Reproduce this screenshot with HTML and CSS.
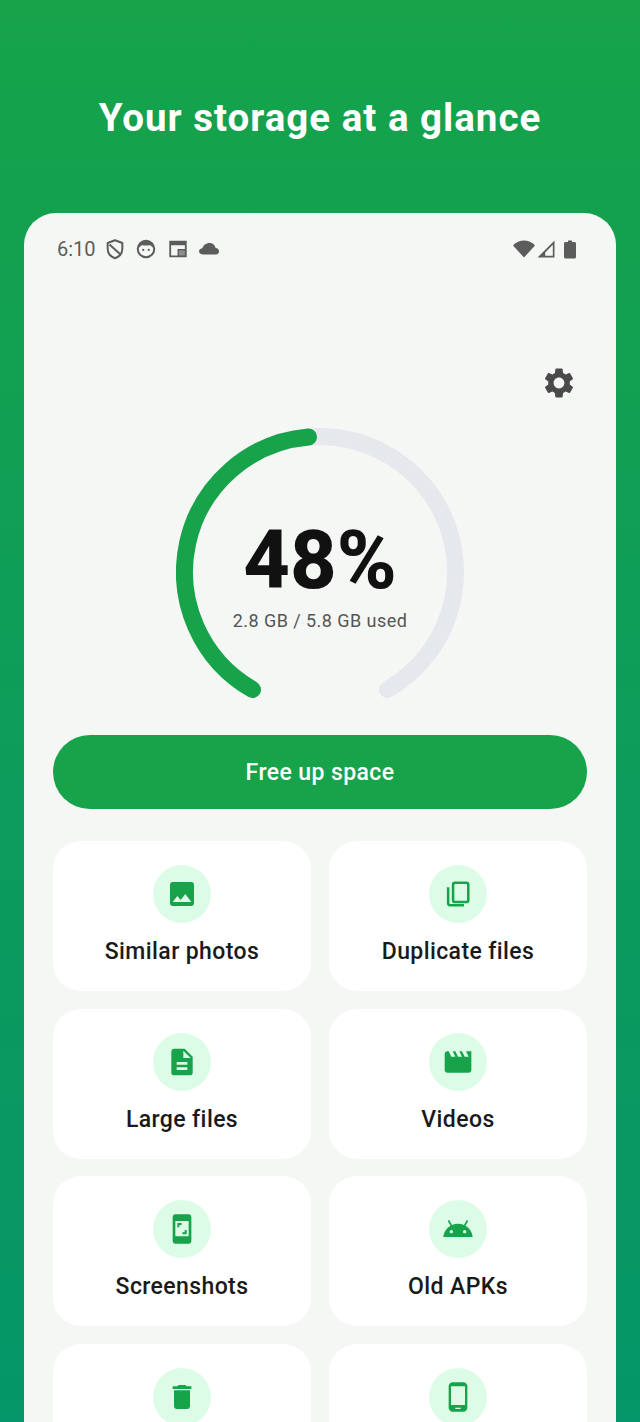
FILE: index.html
```html
<!DOCTYPE html>
<html lang="en">
<head>
    <meta charset="UTF-8">
    <meta name="viewport" content="width=device-width, initial-scale=1.0">
    <title>Storage</title>
    <link rel="stylesheet" href="styles.css">
</head>
<body>
    <div class="screen">
        <h1 class="headline">Your storage at a glance</h1>
        <main class="sheet">
            <!-- Status bar -->
            <div class="status-bar">
                <div class="status-left">
                    <span class="clock">6:10</span>
                    <svg class="status-icon" viewBox="0 0 24 24"><path d="M12 2.5 4 5.5v6c0 5 3.4 9 8 10.5 4.6-1.5 8-5.500 8-10.500v-6z" fill="none" stroke="#5c5c5c" stroke-width="2.2" stroke-linejoin="round"/><path d="M6 7 18 18" stroke="#5c5c5c" stroke-width="2.2"/></svg>
                    <svg class="status-icon" viewBox="0 0 24 24"><circle cx="12" cy="12" r="9" fill="none" stroke="#5c5c5c" stroke-width="2.2"/><path d="M4 10.5C5 5 9 3 12 3s7 2 8 7.5c-2-1.5-3-2.5-4-3-1 1-7 1-8 0-1 .5-2 1.5-4 3z" fill="#5c5c5c"/><circle cx="9" cy="13" r="1.2" fill="#5c5c5c"/><circle cx="15" cy="13" r="1.2" fill="#5c5c5c"/></svg>
                    <svg class="status-icon" viewBox="0 0 24 24"><path fill-rule="evenodd" d="M2.5 3h19v18h-19zM4.500 8v11h7v-7h8V8z" fill="#5c5c5c"/><path d="M13 13.500h6.500V19H13z" fill="#8f8f8f"/></svg>
                    <svg class="cloud-icon" viewBox="0 0 20 13.5"><path d="M4 12.500c-2.200 0-4-1.300-4-3.200 0-1.800 1.600-3 3.400-3.100C4.200 3.400 7 1 10.500 1c3.500 0 5.500 2.300 6.100 5 2 .2 3.400 1.500 3.400 3.300 0 1.900-1.200 3.200-3 3.200z" fill="#5c5c5c"/></svg>
                </div>
                <div class="status-right">
                    <svg class="wifi-icon" viewBox="0 0 22 18"><path d="M0 5.500C3 2.300 7 .5 11 .5s8 1.800 11 5L11 17.500z" fill="#5c5c5c"/></svg>
                    <svg class="signal-icon" viewBox="0 0 18 18"><path fill-rule="evenodd" d="M17.500 .5v17H.5zM15.800 4.700v11.100H8.200v-3.200z" fill="#5c5c5c"/></svg>
                    <svg class="battery-icon" viewBox="0 0 12 18"><path d="M4 0h4v1.500h2.500c.8 0 1.500.7 1.500 1.500v13.500c0 .8-.7 1.500-1.500 1.500h-9C.7 18 0 17.300 0 16.500V3c0-.8.7-1.500 1.500-1.500H4z" fill="#5c5c5c"/></svg>
                </div>
            </div>

            <div class="settings-row">
                <svg class="settings-icon" viewBox="0 0 24 24"><path d="M19.14 12.94c.04-.3.06-.61.06-.94 0-.32-.02-.64-.07-.94l2.03-1.58c.18-.14.23-.41.12-.61l-1.92-3.32c-.12-.22-.37-.29-.59-.22l-2.39.96c-.5-.38-1.03-.7-1.62-.94l-.36-2.54c-.04-.24-.24-.41-.48-.41h-3.84c-.24 0-.43.17-.47.41l-.36 2.54c-.59.24-1.13.57-1.62.94l-2.39-.96c-.22-.08-.47 0-.59.22L2.74 8.87c-.12.21-.08.47.12.61l2.03 1.58c-.05.3-.09.63-.09.94s.02.64.07.94l-2.03 1.58c-.18.14-.23.41-.12.61l1.92 3.32c.12.22.37.29.59.22l2.39-.96c.5.38 1.03.7 1.62.94l.36 2.54c.05.24.24.41.48.41h3.84c.24 0 .44-.17.47-.41l.36-2.54c.59-.24 1.13-.56 1.62-.94l2.39.96c.22.08.47 0 .59-.22l1.92-3.32c.12-.22.07-.47-.12-.61l-2.01-1.58zM12 15.6c-1.98 0-3.6-1.62-3.6-3.6s1.62-3.6 3.6-3.6 3.6 1.62 3.6 3.6-1.62 3.6-3.6 3.6z"/></svg>
            </div>

            <!-- Usage ring -->
            <div class="ring">
                <svg class="ring-svg" viewBox="0 0 288 272">
                    <path class="ring-track" d="M76.500 261.500A135.500 135.500 0 1 1 211.500 261.500"/>
                    <path class="ring-fill" d="M76.500 261.500A135.500 135.500 0 0 1 132.500 9"/>
                </svg>
                <div class="ring-label">
                    <div class="ring-percent">48%</div>
                    <div class="ring-detail">2.8 GB / 5.8 GB used</div>
                </div>
            </div>

            <button class="free-btn">Free up space</button>

            <div class="tools">
                <div class="tool-card">
                    <div class="tool-badge"><svg class="tool-icon" viewBox="0 0 24 24"><path d="M21 19V5c0-1.100-.9-2-2-2H5c-1.100 0-2 .9-2 2v14c0 1.100.9 2 2 2h14c1.100 0 2-.9 2-2zM8.500 13.500l2.500 3.010L14.500 12l4.500 6H5l3.500-4.500z"/></svg></div>
                    <span class="tool-name">Similar photos</span>
                </div>
                <div class="tool-card">
                    <div class="tool-badge"><svg class="tool-icon" viewBox="0 0 24 24"><path d="M4.600 7v12c0 .8.6 1.400 1.400 1.400h10.500" fill="none" stroke="#16a34a" stroke-width="1.900"/><rect x="8.300" y="3.600" width="11.400" height="14.400" rx="1.400" fill="none" stroke="#16a34a" stroke-width="1.900"/></svg></div>
                    <span class="tool-name">Duplicate files</span>
                </div>
                <div class="tool-card">
                    <div class="tool-badge"><svg class="tool-icon" viewBox="0 0 24 24"><path d="M14 2H6c-1.100 0-1.990.9-1.990 2L4 20c0 1.100.89 2 1.990 2H18c1.100 0 2-.9 2-2V8l-6-6zm2 16H8v-2h8v2zm0-4H8v-2h8v2zm-3-5V3.500L18.500 9H13z"/></svg></div>
                    <span class="tool-name">Large files</span>
                </div>
                <div class="tool-card">
                    <div class="tool-badge"><svg class="tool-icon" viewBox="0 0 24 24"><path d="M18 4l2 4h-3l-2-4h-2l2 4h-3l-2-4H8l2 4H7L5 4H4c-1.100 0-1.990.9-1.990 2L2 18c0 1.100.9 2 2 2h16c1.100 0 2-.9 2-2V4h-4z"/></svg></div>
                    <span class="tool-name">Videos</span>
                </div>
                <div class="tool-card">
                    <div class="tool-badge"><svg class="tool-icon" viewBox="0 0 24 24"><path fill-rule="evenodd" d="M7 1h10c1.100 0 2 .9 2 2v18c0 1.100-.9 2-2 2H7c-1.100 0-2-.9-2-2V3c0-1.100.9-2 2-2zM7 6v11.500h10V6z"/><path d="M8.500 7.500h3.200V9H10v1.700H8.500zM15.500 16h-3.200v-1.500H14v-1.700h1.500z"/></svg></div>
                    <span class="tool-name">Screenshots</span>
                </div>
                <div class="tool-card">
                    <div class="tool-badge"><svg class="tool-icon" viewBox="0 0 24 24"><path d="M17.600 9.480l1.840-3.180c.16-.31.04-.69-.26-.85-.29-.15-.65-.06-.83.22l-1.880 3.240c-2.860-1.210-6.080-1.210-8.940 0L5.650 5.670c-.19-.29-.58-.38-.87-.2-.28.18-.37.54-.22.83L6.400 9.480C3.300 11.250 1.280 14.440 1 18h22c-.28-3.560-2.300-6.750-5.400-8.520zM7 15.250c-.69 0-1.250-.56-1.250-1.250s.56-1.250 1.250-1.250 1.250.56 1.250 1.250-.56 1.250-1.250 1.250zm10 0c-.69 0-1.250-.56-1.250-1.250s.56-1.250 1.250-1.250 1.250.56 1.250 1.250-.56 1.250-1.250 1.250z"/></svg></div>
                    <span class="tool-name">Old APKs</span>
                </div>
                <!-- last row runs off the bottom of the screen, labels not visible -->
                <div class="tool-card">
                    <div class="tool-badge"><svg class="tool-icon" viewBox="0 0 24 24"><path d="M6 19c0 1.100.9 2 2 2h8c1.100 0 2-.9 2-2V7H6v12zM19 4h-3.500l-1-1h-5l-1 1H5v2h14V4z"/></svg></div>
                </div>
                <div class="tool-card">
                    <div class="tool-badge"><svg class="tool-icon" viewBox="0 0 24 24"><path d="M16 1H8C6.340 1 5 2.340 5 4v16c0 1.660 1.340 3 3 3h8c1.660 0 3-1.340 3-3V4c0-1.660-1.340-3-3-3zm-2 20h-4v-1h4v1zm3.250-3H6.750V4h10.500v14z"/></svg></div>
                </div>
            </div>
        </main>
    </div>
</body>
</html>
```

FILE: styles.css
```css
* { box-sizing: border-box; }
html, body { margin: 0; padding: 0; }
body { font-family: Roboto, "Liberation Sans", sans-serif; }
.screen { height: 100vh; overflow: hidden; background: linear-gradient(180deg, #16a34a 0%, #059669 100%); padding-top: 96px; }
.headline { margin: 0; height: 117px; text-align: center; color: #fff; font-size: 38.5px; line-height: 43px; font-weight: 700; letter-spacing: 1px; }
.sheet { margin: 0 24px; padding: 0 29px 40px; background: #f5f7f5; border-radius: 32px 32px 0 0; }
/* Status bar */
.status-bar { display: flex; justify-content: space-between; align-items: center; height: 24px; padding: 0 11px 0 4px; position: relative; top: 24px; }
.status-left, .status-right { display: flex; align-items: center; }
.clock { font-size: 20px; color: #5c5c5c; margin-right: 8px; }
.status-icon { width: 22px; height: 22px; margin-right: 9.5px; }
.cloud-icon { width: 20px; height: 13.5px; margin-left: 1px; }
.wifi-icon { width: 22px; height: 18px; margin-right: 2px; }
.signal-icon { width: 18px; height: 18px; margin-right: 9px; }
.battery-icon { width: 12px; height: 19px; }
.settings-row { display: flex; justify-content: flex-end; padding: 127.5px 10px 0 0; }
.settings-icon { width: 36px; height: 36px; fill: #4a4a4a; }
/* Ring */
.ring { position: relative; width: 288px; height: 272px; margin: 27.5px auto 0; }
.ring-svg { display: block; width: 288px; height: 272px; }
.ring-track, .ring-fill { fill: none; stroke-width: 17; stroke-linecap: round; }
.ring-track { stroke: #e5e8ec; }
.ring-fill { stroke: #16a34a; }
.ring-label { position: absolute; top: 89px; left: 0; right: 0; text-align: center; }
.ring-percent { font-size: 81px; line-height: 88px; font-weight: 800; color: #111; }
.ring-detail { margin-top: 4px; font-size: 18px; line-height: 24px; color: #555; letter-spacing: .45px; }
.free-btn { display: block; width: 100%; height: 74px; margin-top: 35px; border: none; border-radius: 37px; background: #16a34a; color: #fff; font-family: inherit; font-size: 23px; font-weight: 500; letter-spacing: .4px; cursor: pointer; }
/* Tool grid */
.tools { display: grid; grid-template-columns: 1fr 1fr; gap: 17.5px 18px; margin-top: 32px; }
.tool-card { display: flex; flex-direction: column; align-items: center; height: 150px; padding-top: 24px; background: #fff; border-radius: 28px; }
.tool-badge { display: flex; align-items: center; justify-content: center; width: 58px; height: 58px; border-radius: 50%; background: #dcfce7; }
.tool-icon { width: 32px; height: 32px; fill: #16a34a; }
.tool-name { margin-top: 16px; font-size: 23px; line-height: 26px; font-weight: 500; color: #1a1a1a; letter-spacing: .4px; }
```
